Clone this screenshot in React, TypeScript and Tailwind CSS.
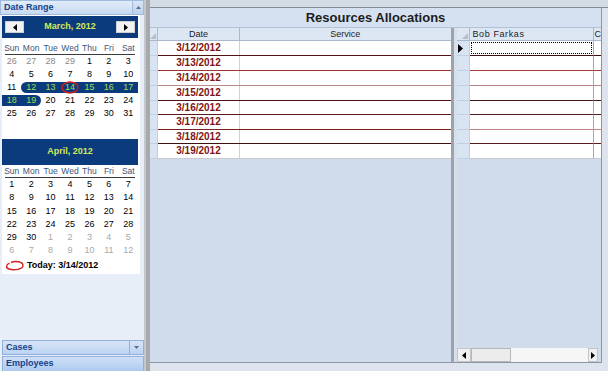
import React from "react";

type Day = { d: number; o?: boolean };

const F = "font-['Liberation_Sans',Arial,sans-serif]";

const march: Day[][] = [
  [{ d: 26, o: true }, { d: 27, o: true }, { d: 28, o: true }, { d: 29, o: true }, { d: 1 }, { d: 2 }, { d: 3 }],
  [4, 5, 6, 7, 8, 9, 10].map((d) => ({ d })),
  [11, 12, 13, 14, 15, 16, 17].map((d) => ({ d })),
  [18, 19, 20, 21, 22, 23, 24].map((d) => ({ d })),
  [25, 26, 27, 28, 29, 30, 31].map((d) => ({ d })),
];

const april: Day[][] = [
  [1, 2, 3, 4, 5, 6, 7].map((d) => ({ d })),
  [8, 9, 10, 11, 12, 13, 14].map((d) => ({ d })),
  [15, 16, 17, 18, 19, 20, 21].map((d) => ({ d })),
  [22, 23, 24, 25, 26, 27, 28].map((d) => ({ d })),
  [{ d: 29 }, { d: 30 }, { d: 1, o: true }, { d: 2, o: true }, { d: 3, o: true }, { d: 4, o: true }, { d: 5, o: true }],
  [6, 7, 8, 9, 10, 11, 12].map((d) => ({ d, o: true })),
];

const dayNames = ["Sun", "Mon", "Tue", "Wed", "Thu", "Fri", "Sat"];

function DayNames() {
  return (
    <div className="mx-[3px] h-[12px] border-b border-[#3a3a3a]">
      <div className="-ml-[3px] w-[136px] grid grid-cols-7 text-[8.5px] leading-[11px] text-[#3c5478]">
        {dayNames.map((n) => (
          <div key={n} className="text-center">
            {n}
          </div>
        ))}
      </div>
    </div>
  );
}

function Arrow({ dir }: { dir: "l" | "r" }) {
  return (
    <div className="w-[19px] h-[12px] bg-[#f2f2f2] border border-[#d0d0d0] flex items-center justify-center">
      <svg width="4" height="7" viewBox="0 0 4 7">
        {dir === "l" ? <polygon points="4,0 4,7 0,3.5" fill="#000" /> : <polygon points="0,0 0,7 4,3.5" fill="#000" />}
      </svg>
    </div>
  );
}

function MarchCal() {
  return (
    <div className="w-[136px]">
      <div className="h-[22px] bg-[#0b3b7c] flex items-center justify-between px-[3px]">
        <Arrow dir="l" />
        <span className="text-[9px] font-bold text-[#d2ea5a]">March, 2012</span>
        <Arrow dir="r" />
      </div>
      <div className="mt-[5px]">
        <DayNames />
      </div>
      {march.map((w, wi) => (
        <div key={wi} className="grid grid-cols-7 h-[13px] text-[9px] leading-[11px]">
          {w.map((c, ci) => {
            const band3 = wi === 2 && ci >= 1;
            const band4 = wi === 3 && ci <= 1;
            const band = band3 || band4;
            const rl = band3 && ci === 1 ? "rounded-l-full" : "";
            const rr = band4 && ci === 1 ? "rounded-r-full" : "";
            return (
              <div key={ci} className="relative flex items-center">
                <div
                  className={`w-full h-[11px] text-center ${band ? `bg-[#0b3b7c] text-[#9ade52] ${rl} ${rr}` : c.o ? "text-[#8a8a8a]" : "text-black"}`}
                >
                  {c.d}
                </div>
                {wi === 2 && ci === 3 && (
                  <svg className="absolute left-[1px] top-[0px]" width="18" height="13" viewBox="0 0 18 13">
                    <ellipse cx="9" cy="6.5" rx="8" ry="5.5" fill="none" stroke="#d62020" strokeWidth="1.3" />
                  </svg>
                )}
              </div>
            );
          })}
        </div>
      ))}
    </div>
  );
}

function AprilCal() {
  return (
    <div className="w-[136px]">
      <div className="h-[26px] bg-[#0b3b7c] flex items-center justify-center">
        <span className="text-[9px] font-bold text-[#d2ea5a]">April, 2012</span>
      </div>
      <div className="mt-[1px]">
        <DayNames />
      </div>
      {april.map((w, wi) => (
        <div key={wi} className="grid grid-cols-7 h-[13.3px] text-[9px] leading-[13px]">
          {w.map((c, ci) => (
            <div key={ci} className={`text-center ${c.o ? "text-[#a8a8a8]" : "text-black"}`}>
              {c.d}
            </div>
          ))}
        </div>
      ))}
      <div className="h-[16px] flex items-center pl-[3px] gap-[2px]">
        <svg width="20" height="11" viewBox="0 0 20 11">
          <path d="M6 2.5 C 10 0.5, 18 1.5, 18 5.5 C 18 9.5, 9 10.5, 4 9 C 0.5 8, 1 4.5, 4.5 3.2" fill="none" stroke="#d62020" strokeWidth="1.4" />
        </svg>
        <span className="text-[9px] font-bold text-black">Today: 3/14/2012</span>
      </div>
    </div>
  );
}

function LeftPanel() {
  return (
    <div className={`w-[144px] h-full flex flex-col bg-[#e8eef8] ${F}`}>
      <div className="flex h-[15px]">
        <div className="flex-1 bg-gradient-to-b from-[#e2ecf9] to-[#c8daf1] border border-[#9fbbe0] text-[#15428b] font-bold text-[9px] leading-[13px] pl-[3px]">
          Date Range
        </div>
        <div className="w-[11px] bg-gradient-to-b from-[#dae6f6] to-[#bcd0ec] border border-l-0 border-[#9fbbe0] flex items-center justify-center">
          <svg width="5" height="3" viewBox="0 0 5 3">
            <polygon points="0,3 5,3 2.5,0" fill="#5a6e8c" />
          </svg>
        </div>
      </div>
      <div className="ml-[2px] w-[138px] h-[259px] bg-white pt-[1px]">
        <MarchCal />
        <div className="mt-[19px]">
          <AprilCal />
        </div>
      </div>
      <div className="flex-1" />
      <div className="flex h-[15px] ml-[2px]">
        <div className="flex-1 bg-gradient-to-b from-[#d6e5f8] to-[#bcd3f0] border border-[#8fb0dc] text-[#15428b] font-bold text-[9px] leading-[13px] pl-[3px]">
          Cases
        </div>
        <div className="w-[14px] bg-gradient-to-b from-[#d6e5f8] to-[#bcd3f0] border border-l-0 border-[#8fb0dc] flex items-center justify-center">
          <svg width="5" height="3" viewBox="0 0 5 3">
            <polygon points="0,0 5,0 2.5,3" fill="#5a6e8c" />
          </svg>
        </div>
      </div>
      <div className="h-[15px] ml-[2px] mt-[1px] bg-gradient-to-b from-[#cfe0f7] to-[#aecaf0] border-t border-x border-[#8fb0dc] text-[#15428b] font-bold text-[9px] leading-[13px] pl-[3px]">
        Employees
      </div>
    </div>
  );
}

const dates = ["3/12/2012", "3/13/2012", "3/14/2012", "3/15/2012", "3/16/2012", "3/17/2012", "3/18/2012", "3/19/2012"];
const rowH = ["h-[15px]", "h-[15px]", "h-[15px]", "h-[15px]", "h-[14px]", "h-[15px]", "h-[14px]", "h-[15px]"];
const lineL = ["border-[#4e1212]", "border-[#9c3434]", "border-[#b88a8a]", "border-[#4a1414]", "border-[#5a1a1a]", "border-[#7a2222]", "border-[#3e1010]", "border-[#c8ccd2]"];
const lineR = ["border-[#3a1010]", "border-[#a33a3a]", "border-[#b88484]", "border-[#421616]", "border-[#521c1c]", "border-[#c08484]", "border-[#5a1a1a]", "border-[#c8ccd2]"];

function Corner() {
  return (
    <svg width="6" height="6" viewBox="0 0 6 6" className="absolute right-[1px] bottom-[1px]">
      <polygon points="6,0 6,6 0,6" fill="#b4bfcc" />
    </svg>
  );
}

function LeftGrid() {
  return (
    <div className="w-[302px] flex flex-col bg-[#d0dcec]">
      <div className="flex h-[13px] bg-[#dde7f4] border-b border-[#a9b9cd] text-[9px] leading-[12px] text-[#222]">
        <div className="relative w-[8px] border-r border-[#a9b9cd]">
          <Corner />
        </div>
        <div className="w-[82px] text-center border-r border-[#a9b9cd]">Date</div>
        <div className="flex-1 text-center">Service</div>
      </div>
      {dates.map((d, i) => (
        <div key={d} className={`flex ${rowH[i]}`}>
          <div className="w-[8px] bg-[#d9e4f2] border-b border-r border-[#c2cfe0]" />
          <div className={`w-[82px] bg-white border-b ${lineL[i]} text-center text-[10px] font-bold text-[#7e1414] leading-[14px]`}>
            <div className="border-r border-[#cfd3d8] h-full">{d}</div>
          </div>
          <div className={`flex-1 bg-white border-b ${lineL[i]}`} />
        </div>
      ))}
      <div className="flex-1" />
    </div>
  );
}

function RightGrid() {
  return (
    <div className="flex-1 flex flex-col bg-[#d0dcec]">
      <div className="flex h-[13px] bg-[#dde7f4] border-b border-[#a9b9cd] text-[9px] leading-[12px] text-[#222]">
        <div className="relative w-[13px] border-r border-[#a9b9cd]">
          <Corner />
        </div>
        <div className="w-[124px] pl-[3px] tracking-[0.6px] border-r border-[#a9b9cd]">Bob Farkas</div>
        <div className="flex-1 overflow-hidden pl-[1px]">C</div>
      </div>
      {dates.map((d, i) => (
        <div key={d} className={`flex ${rowH[i]}`}>
          <div className="w-[13px] bg-[#d9e4f2] border-b border-r border-[#c2cfe0] flex items-center pl-[1px]">
            {i === 0 && (
              <svg width="5" height="9" viewBox="0 0 5 9">
                <polygon points="0,0 5,4.5 0,9" fill="#000" />
              </svg>
            )}
          </div>
          <div className={`w-[124px] bg-white border-b ${lineR[i]} border-r-[#a8a8a8] border-r p-[1px]`}>
            {i === 0 && <div className="h-full border border-dotted border-black" />}
          </div>
          <div className={`flex-1 bg-white border-b ${lineR[i]}`} />
        </div>
      ))}
      <div className="flex-1" />
      <div className="flex h-[14px] mr-[3px] bg-[#f3f3f3]">
        <div className="w-[14px] bg-[#f0f0f0] border border-[#c4c4c4] flex items-center justify-center">
          <svg width="4" height="7" viewBox="0 0 4 7">
            <polygon points="4,0 4,7 0,3.5" fill="#000" />
          </svg>
        </div>
        <div className="w-[40px] bg-[#ececec] border border-[#b8b8b8]" />
        <div className="flex-1 bg-[#f6f6f6]" />
        <div className="w-[10px] bg-[#f0f0f0] border border-[#c4c4c4] flex items-center justify-center">
          <svg width="4" height="7" viewBox="0 0 4 7">
            <polygon points="0,0 0,7 4,3.5" fill="#000" />
          </svg>
        </div>
      </div>
    </div>
  );
}

export default function App() {
  return (
    <div className={`w-[608px] h-[371px] flex overflow-hidden bg-[#dce3ec] ${F}`}>
      <LeftPanel />
      <div className="w-[6px] h-full bg-[#a7a9ac] border-l-2 border-[#c4c8cc]" />
      <div className="flex-1 flex flex-col">
        <div className="h-[8px] bg-[#d3dbe5] border-b border-[#7f8a96]" />
        <div className="h-[355px] flex">
          <div className="w-[452px] flex flex-col border-r border-b border-[#8a96a4]">
            <div className="h-[20px] bg-[#d5e1f1] border-b border-[#b2c2d6] flex items-center justify-center text-[13px] font-bold text-[#1c1c1c]">
              Resources Allocations
            </div>
            <div className="flex-1 flex">
              <LeftGrid />
              <div className="w-[6px] flex">
                <div className="w-[3px] bg-[#9ea3aa]" />
                <div className="w-[3px] bg-[#d6e0ec]" />
              </div>
              <RightGrid />
            </div>
          </div>
          <div className="flex-1 bg-[#dde4ed]" />
        </div>
        <div className="flex-1 bg-[#dde4ed]" />
      </div>
    </div>
  );
}
